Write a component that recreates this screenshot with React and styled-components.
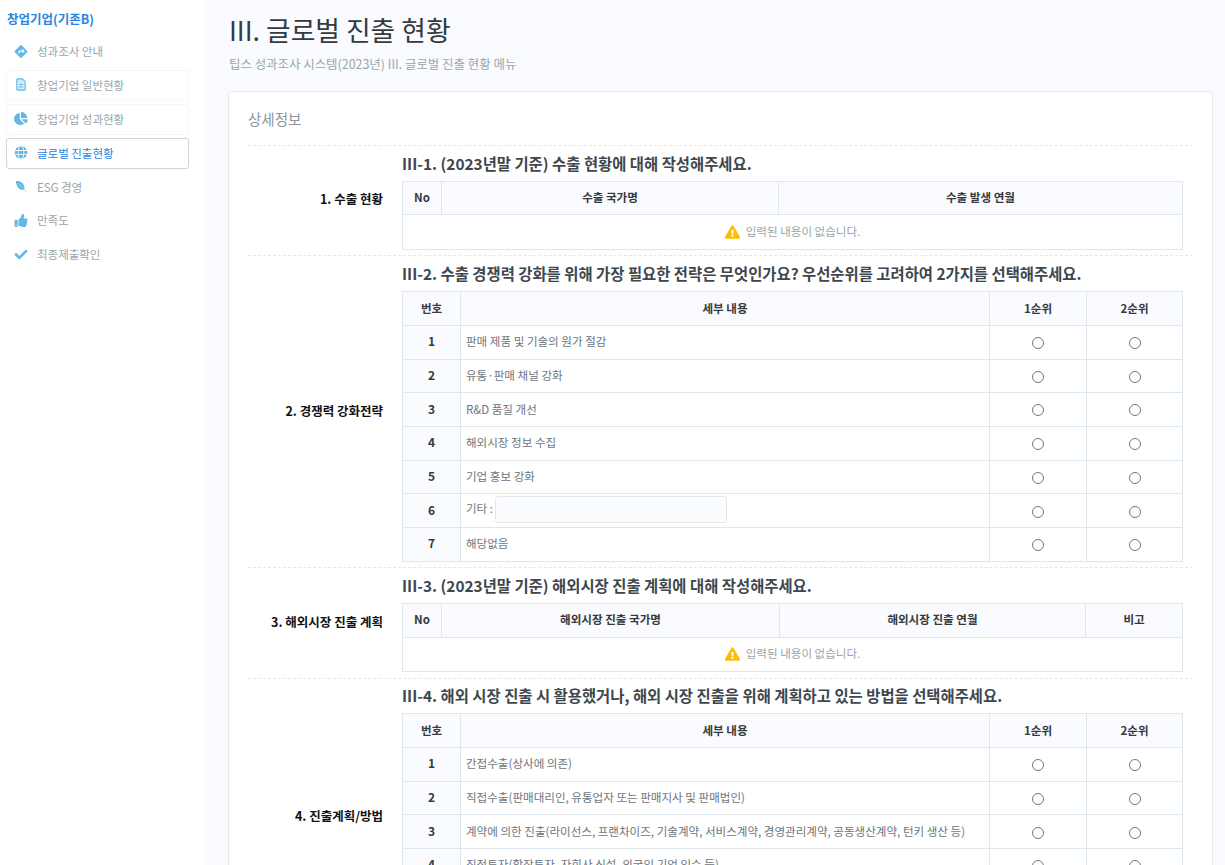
import React from "react";
import styled, { createGlobalStyle } from "styled-components";
import { FaChartPie, FaGlobe, FaThumbsUp, FaCheck, FaDirections, FaExclamationTriangle } from "react-icons/fa";

const Global = createGlobalStyle`
  html, body { margin: 0; padding: 0; height: 865px; overflow: hidden; background: #fafbfe; }
  body { font-family: "Noto Sans CJK KR", "Noto Sans", sans-serif; color: #6c757d; font-size: 14px; }
  * { box-sizing: border-box; }
`;

const Page = styled.div`display: flex; height: 865px; overflow: hidden;`;
const Side = styled.aside`width: 205px; flex: none; background: #fff; padding: 9px 16px 0 6px;`;
const SideTitle = styled.div`font-size: 12.5px; font-weight: 700; color: #2b84e0; line-height: 20px; margin: 0 0 7.5px 1px;`;
const NavItem = styled.div`
  height: 31px; margin-bottom: 2.9px; display: flex; align-items: center; padding: 0 0 2px 7px; gap: 9px;
  border-radius: 3px; font-size: 11.55px; letter-spacing: -0.05px;
  color: ${p => (p.$active ? "#2b84e0" : "#98a6ad")};
  border: 1px solid ${p => (p.$active ? "#ced4da" : p.$soft ? "#f4f6f8" : "transparent")};
  svg { color: #5fb8e8; width: 14px; height: 13px; flex: none; }
`;
const Main = styled.main`flex: 1; min-width: 0; padding: 10px 12px 0 23px;`;
const Title = styled.h1`margin: 0 0 0 1px; font-size: 26.8px; font-weight: 400; line-height: 40px; color: #343a40;`;
const Sub = styled.p`margin: 5px 0 0 1px; font-size: 12.45px; line-height: 19px; color: #98a6ad;`;
const Card = styled.section`
  margin-top: 17px; background: #fff; border: 1px solid #e3eaef; border-radius: 4px; padding: 16px 19px 0;
`;
const CardTitle = styled.h2`margin: 0 0 15px; font-size: 14.5px; font-weight: 400; line-height: 22px; color: #8a969c;`;
const Row = styled.div`
  display: flex; border-top: 1px dashed #e3e6ea; padding-bottom: 5.5px;
`;
const Label = styled.div`
  width: 135px; flex: none; align-self: center; padding-top: 2px; text-align: right; font-size: 12.5px; font-weight: 700; color: #111; line-height: 19px;
`;
const Body = styled.div`flex: 1; min-width: 0; margin: 0 10px 0 19px;`;
const Heading = styled.h3`
  margin: 0; height: 34.8px; padding-top: 4.5px; font-size: 15.4px; font-weight: 700; line-height: 24px; color: #3f474e; white-space: nowrap;
`;
const Table = styled.table`
  width: 780px; border-collapse: collapse; table-layout: fixed; font-size: 11.55px;
`;
const Col = styled.col`width: ${p => p.$w}px;`;
const Th = styled.th`
  height: 33.7px; padding: 0 0 2px; border: 1px solid #dee6ee; background: #fafbfe; font-size: 11.55px; font-weight: 700; color: #343a40; text-align: center;
`;
const Num = styled.td`
  height: 33.7px; padding: 0 0 3px; border: 1px solid #dee6ee; background: #fafbfe; font-size: 12px; font-weight: 700; color: #343a40; text-align: center;
`;
const Td = styled.td`
  height: 33.7px; padding: 0 5px 2px; border: 1px solid #dee6ee; color: #6c757d; white-space: nowrap;
`;
const RadioCell = styled.td`height: 33.7px; padding: 0 0 2px; border: 1px solid #dee6ee; text-align: center;`;
const Radio = styled.span`
  display: inline-block; width: 12px; height: 12px; border: 1px solid #777; border-radius: 50%; vertical-align: middle; background: #fff;
`;
const Empty = styled.td`
  height: 34.4px; padding: 0 0 2px; border: 1px solid #dee6ee; text-align: center; color: #98a6ad;
  svg { color: #ffbc00; width: 15px; height: 14px; margin-right: 6px; vertical-align: -3px; }
`;
const Other = styled.input`
  width: 232px; height: 27px; margin-left: 2px; vertical-align: middle; border: 1px solid #e3e6ea; border-radius: 3px; background: #fbfcfd; outline: none;
`;

const FileIcon = () => (
  <svg viewBox="0 0 14 14" fill="none">
    <path d="M3 1h5.5L11.5 4v8a1 1 0 0 1-1 1h-7a1 1 0 0 1-1-1V2a1 1 0 0 1 .5-1z" fill="#cfeaf8" stroke="#5fb8e8" strokeWidth="1.2" strokeLinejoin="round" />
    <path d="M4.8 7h4.4M4.8 9.6h4.4" stroke="#5fb8e8" strokeWidth="1.1" />
  </svg>
);

const LeafIcon = () => (
  <svg viewBox="0 0 14 14">
    <path d="M1.5 1C7 .8 11 3.5 10.8 10.5 6 11.5 2 8 1.5 1z" fill="#5fb8e8" />
    <path d="M4 3.5 13 13" stroke="#a9d8f2" strokeWidth="0.9" fill="none" />
  </svg>
);

const nav = [
  [FaDirections, "성과조사 안내"],
  [FileIcon, "창업기업 일반현황", "soft"],
  [FaChartPie, "창업기업 성과현황", "soft"],
  [FaGlobe, "글로벌 진출현황", "active"],
  [LeafIcon, "ESG 경영"],
  [FaThumbsUp, "만족도"],
  [FaCheck, "최종제출확인"],
];

const choice2 = ["판매 제품 및 기술의 원가 절감", "유통·판매 채널 강화", "R&D 품질 개선", "해외시장 정보 수집", "기업 홍보 강화", "other", "해당없음"];
const choice4 = [
  "간접수출(상사에 의존)",
  "직접수출(판매대리인, 유통업자 또는 판매지사 및 판매법인)",
  "계약에 의한 진출(라이선스, 프랜차이즈, 기술계약, 서비스계약, 경영관리계약, 공동생산계약, 턴키 생산 등)",
  "직접투자(합작투자, 자회사 신설, 외국인 기업 인수 등)",
  "기타",
  "해당없음",
];

function EmptyRow({ span }) {
  return (
    <tr>
      <Empty colSpan={span}><FaExclamationTriangle />입력된 내용이 없습니다.</Empty>
    </tr>
  );
}

function ChoiceTable({ items }) {
  return (
    <Table>
      <colgroup><Col $w={58} /><Col $w={529} /><Col $w={97} /><Col $w={96} /></colgroup>
      <thead>
        <tr><Th>번호</Th><Th>세부 내용</Th><Th>1순위</Th><Th>2순위</Th></tr>
      </thead>
      <tbody>
        {items.map((t, i) => (
          <tr key={t}>
            <Num>{i + 1}</Num>
            <Td>{t === "other" ? <>기타 :<Other readOnly /></> : t}</Td>
            <RadioCell><Radio /></RadioCell>
            <RadioCell><Radio /></RadioCell>
          </tr>
        ))}
      </tbody>
    </Table>
  );
}

export default function App() {
  return (
    <Page>
      <Global />
      <Side>
        <SideTitle>창업기업(기존B)</SideTitle>
        {nav.map(([Icon, text, kind]) => (
          <NavItem key={text} $active={kind === "active"} $soft={kind === "soft"}>
            <Icon />{text}
          </NavItem>
        ))}
      </Side>
      <Main>
        <Title>III. 글로벌 진출 현황</Title>
        <Sub>팁스 성과조사 시스템(2023년) III. 글로벌 진출 현황 메뉴</Sub>
        <Card>
          <CardTitle>상세정보</CardTitle>
          <Row>
            <Label>1. 수출 현황</Label>
            <Body>
              <Heading>III-1. (2023년말 기준) 수출 현황에 대해 작성해주세요.</Heading>
              <Table>
                <colgroup><Col $w={39} /><Col $w={337} /><Col $w={404} /></colgroup>
                <thead><tr><Th>No</Th><Th>수출 국가명</Th><Th>수출 발생 연월</Th></tr></thead>
                <tbody><EmptyRow span={3} /></tbody>
              </Table>
            </Body>
          </Row>
          <Row>
            <Label>2. 경쟁력 강화전략</Label>
            <Body>
              <Heading>III-2. 수출 경쟁력 강화를 위해 가장 필요한 전략은 무엇인가요? 우선순위를 고려하여 2가지를 선택해주세요.</Heading>
              <ChoiceTable items={choice2} />
            </Body>
          </Row>
          <Row>
            <Label>3. 해외시장 진출 계획</Label>
            <Body>
              <Heading>III-3. (2023년말 기준) 해외시장 진출 계획에 대해 작성해주세요.</Heading>
              <Table>
                <colgroup><Col $w={39} /><Col $w={338} /><Col $w={306} /><Col $w={97} /></colgroup>
                <thead><tr><Th>No</Th><Th>해외시장 진출 국가명</Th><Th>해외시장 진출 연월</Th><Th>비고</Th></tr></thead>
                <tbody><EmptyRow span={4} /></tbody>
              </Table>
            </Body>
          </Row>
          <Row>
            <Label>4. 진출계획/방법</Label>
            <Body>
              <Heading>III-4. 해외 시장 진출 시 활용했거나, 해외 시장 진출을 위해 계획하고 있는 방법을 선택해주세요.</Heading>
              <ChoiceTable items={choice4} />
            </Body>
          </Row>
        </Card>
      </Main>
    </Page>
  );
}
